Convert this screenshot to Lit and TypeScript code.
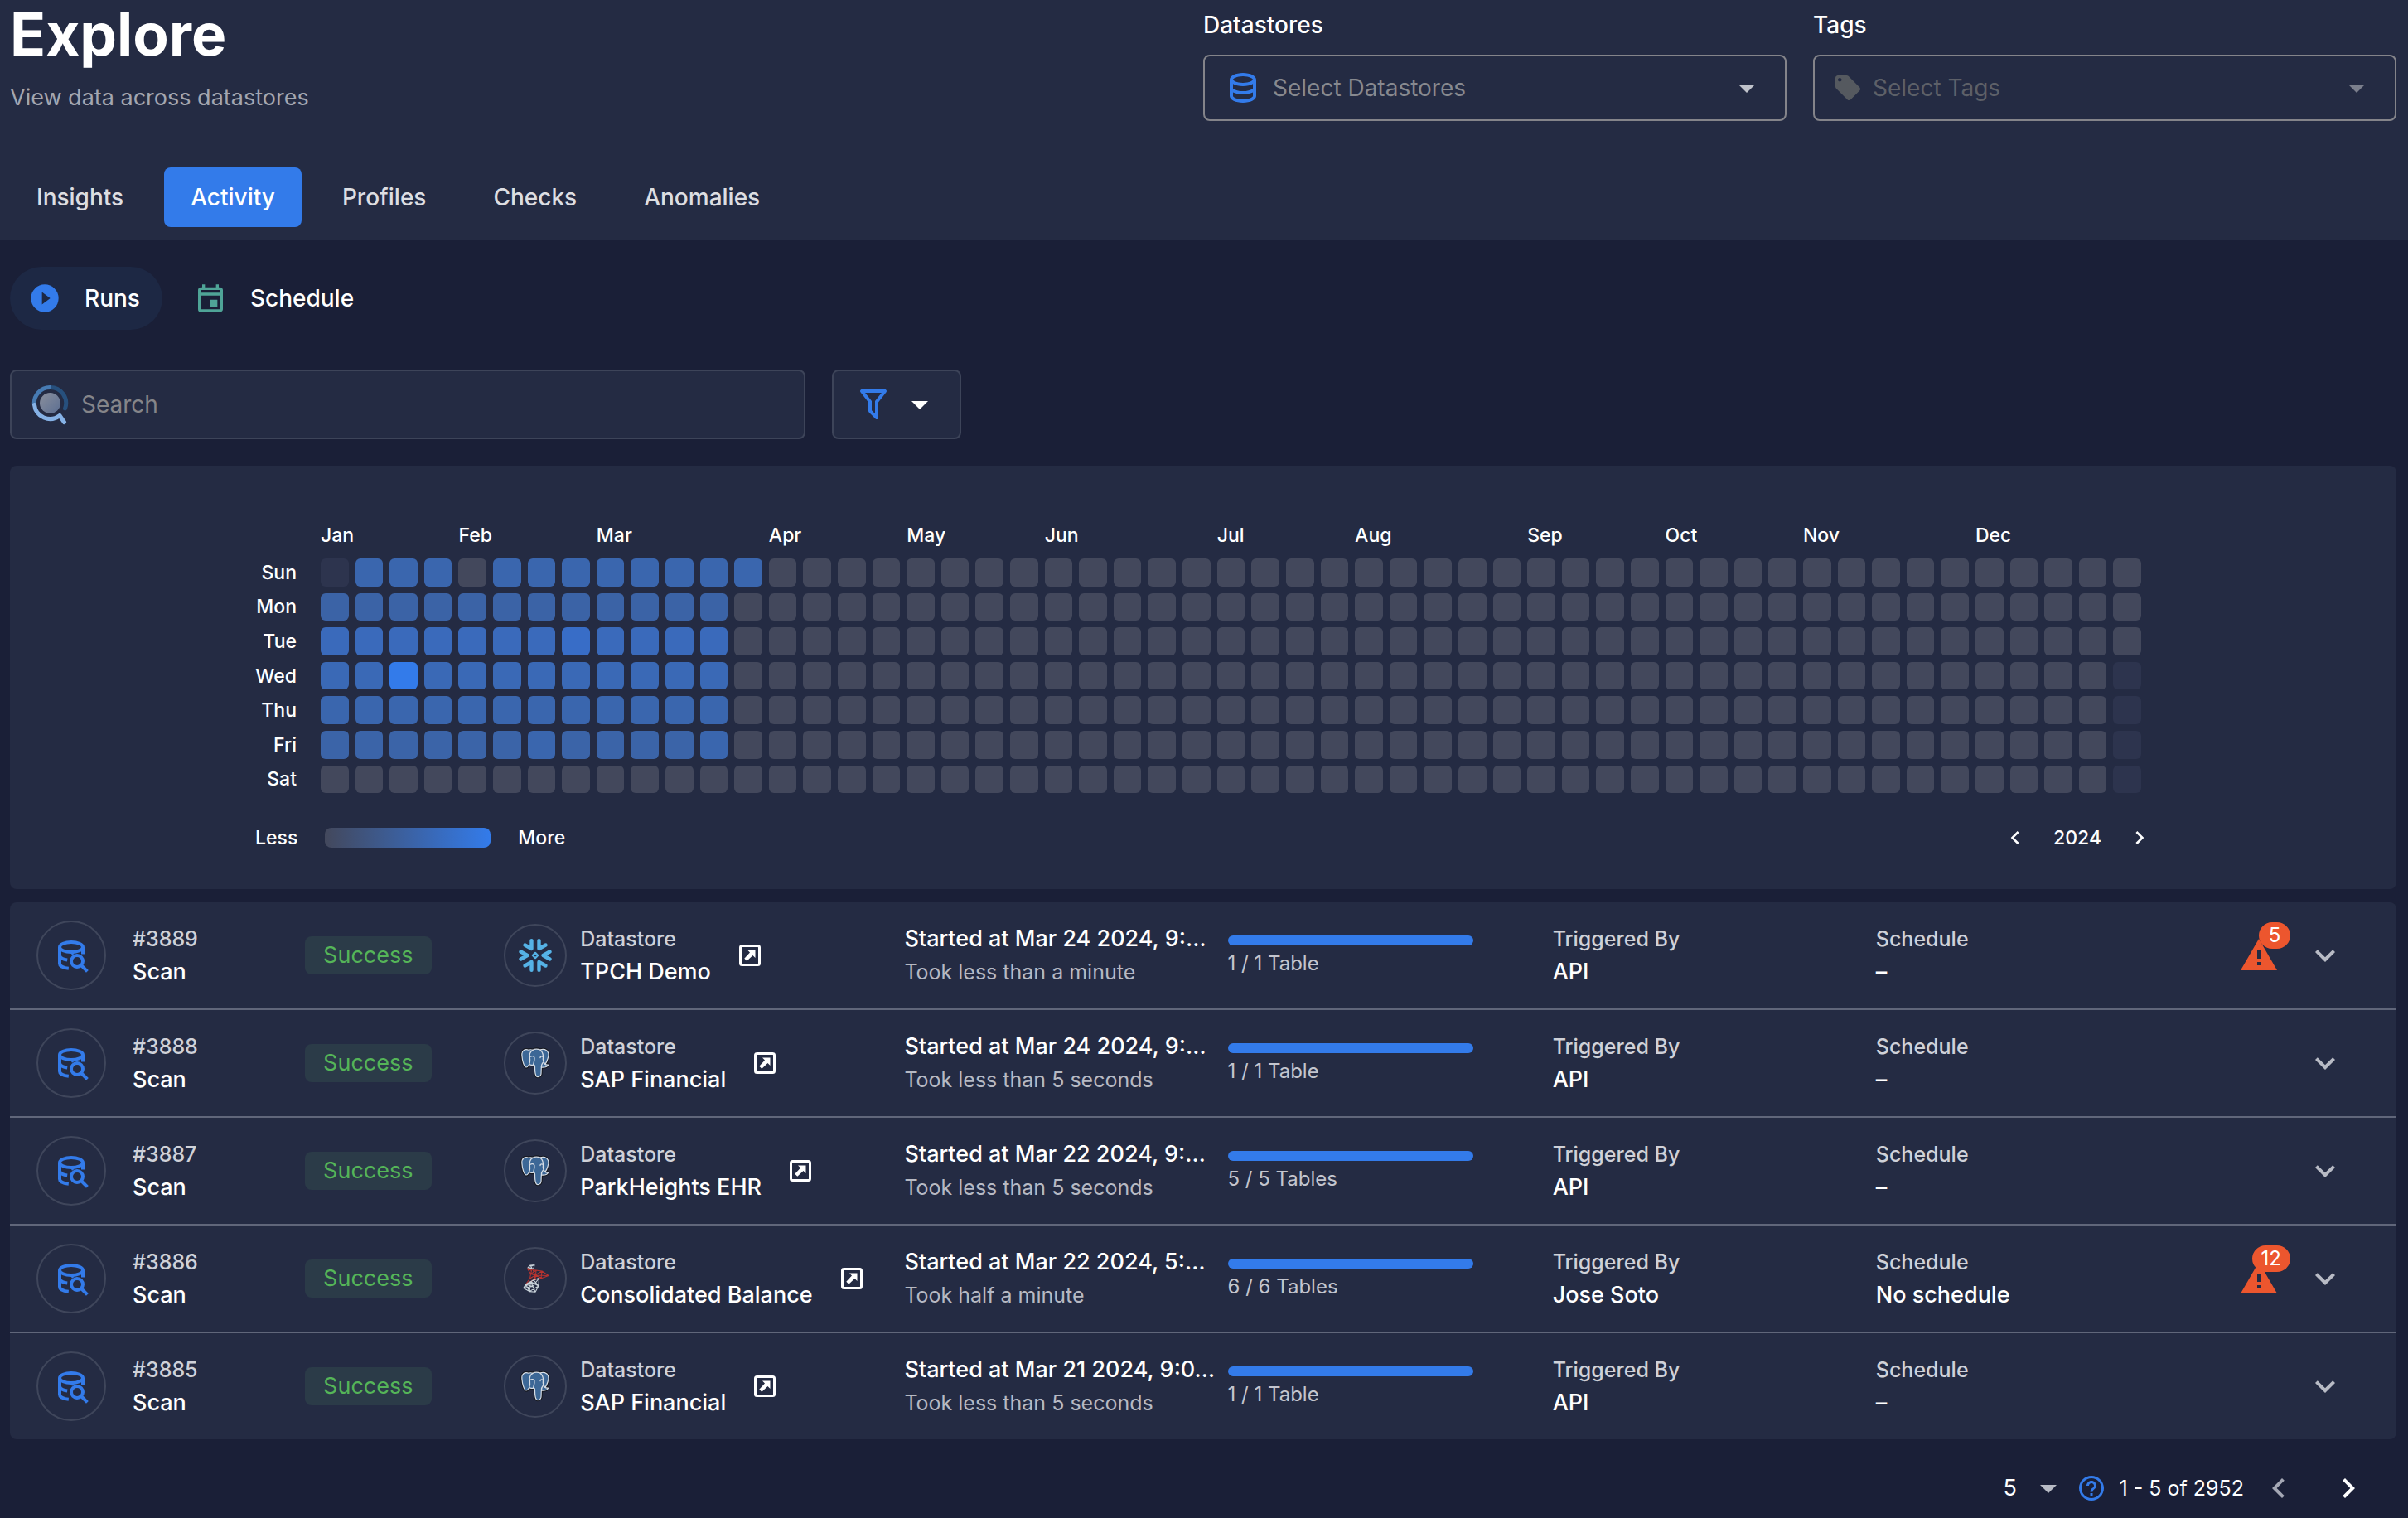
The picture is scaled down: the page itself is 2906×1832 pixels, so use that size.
import { LitElement, html, svg, css, nothing, SVGTemplateResult } from "lit";
import { customElement, state } from "lit/decorators.js";
import { classMap } from "lit/directives/class-map.js";

const PATHS = {
  database:
    "M12 3C7.58 3 4 4.79 4 7V17C4 19.21 7.59 21 12 21S20 19.21 20 17V7C20 4.79 16.42 3 12 3M18 17C18 17.5 15.87 19 12 19S6 17.5 6 17V14.77C7.61 15.55 9.72 16 12 16S16.39 15.55 18 14.77V17M18 12.45C16.7 13.4 14.42 14 12 14C9.58 14 7.3 13.4 6 12.45V9.64C7.47 10.47 9.61 11 12 11C14.39 11 16.53 10.47 18 9.64V12.45M12 9C8.13 9 6 7.5 6 7S8.13 5 12 5C15.87 5 18 6.5 18 7S15.87 9 12 9Z",
  tag: "M21.41 11.58l-9-9C12.05 2.22 11.55 2 11 2H4c-1.1 0-2 .9-2 2v7c0 .55.22 1.05.59 1.42l9 9c.36.36.86.58 1.41.58s1.05-.22 1.41-.59l7-7c.37-.36.59-.86.59-1.41 0-.55-.23-1.06-.59-1.42zM5.5 7C4.67 7 4 6.33 4 5.5S4.67 4 5.5 4 7 4.67 7 5.5 6.33 7 5.5 7z",
  play: "M10 16.5V7.5L16 12M12 2A10 10 0 0 0 2 12A10 10 0 0 0 12 22A10 10 0 0 0 22 12A10 10 0 0 0 12 2Z",
  calendar:
    "M19 4h-1V2h-2v2H8V2H6v2H5c-1.11 0-1.99.9-1.99 2L3 20a2 2 0 0 0 2 2h14c1.1 0 2-.9 2-2V6c0-1.1-.9-2-2-2zm0 16H5V10h14v10zm0-12H5V6h14v2zM17 13h-5v5h5z",
  filter:
    "M15,19.88C15.04,20.18 14.94,20.5 14.71,20.71C14.32,21.1 13.69,21.1 13.3,20.71L9.29,16.7C9.06,16.47 8.96,16.16 9,15.87V10.75L4.21,4.62C3.87,4.19 3.95,3.56 4.38,3.22C4.57,3.08 4.78,3 5,3H19C19.22,3 19.43,3.08 19.62,3.22C20.05,3.56 20.13,4.19 19.79,4.62L15,10.75V19.88M7.04,5L11,10.06V15.58L13,17.58V10.05L16.96,5H7.04Z",
  caret: "M7 10L12 15L17 10Z",
  alert: "M13 14H11V9H13M13 18H11V16H13M1 21H23L12 2L1 21Z",
  down: "M7.41 8.58L12 13.17L16.59 8.58L18 10L12 16L6 10L7.41 8.58Z",
  left: "M15.41 16.58L10.83 12L15.41 7.41L14 6L8 12L14 18L15.41 16.58Z",
  right: "M8.59 16.58L13.17 12L8.59 7.41L10 6L16 12L10 18L8.59 16.58Z",
  help: "M11 18h2v-2h-2v2zm1-16C6.48 2 2 6.48 2 12s4.48 10 10 10 10-4.48 10-10S17.52 2 12 2zm0 18c-4.41 0-8-3.59-8-8s3.59-8 8-8 8 3.59 8 8-3.59 8-8 8zm0-14c-2.21 0-4 1.79-4 4h2c0-1.1.9-2 2-2s2 .9 2 2c0 2-3 1.75-3 5h2c0-2.25 3-2.5 3-5 0-2.21-1.79-4-4-4z",
};

const icon = (name: keyof typeof PATHS, cls = "") =>
  html`<svg class="icon ${cls}" viewBox="0 0 24 24" aria-hidden="true"><path d=${PATHS[name]} /></svg>`;

const scanIcon = html`<svg class="icon large" viewBox="0 0 24 24" aria-hidden="true">
  <g fill="none" stroke="#337bea" stroke-width="2">
    <ellipse cx="12" cy="7" rx="7" ry="3" />
    <path d="M5 7v10c0 1.500 2.300 2.600 5.400 2.900M19 7v4.200M5 12.300c.6 1.300 2.200 2.200 4.600 2.500M13.500 10.200c-.6.200-1 .5-1.500.8" />
    <circle cx="15.500" cy="15.500" r="3.500" />
    <path d="M18 18l3.700 3.700" />
  </g>
</svg>`;

const searchLogo = html`<svg class="logo" viewBox="0 0 46 50" aria-hidden="true">
  <defs>
    <linearGradient id="disc" x1="0" y1="0" x2="1" y2="1">
      <stop offset="0" stop-color="#8a8f9c" />
      <stop offset="1" stop-color="#5b6e92" />
    </linearGradient>
  </defs>
  <g fill="none" stroke-width="5">
    <path d="M22.500 4.500A19 19 0 0 1 40.500 30" stroke="#27507d" stroke-linecap="round" />
    <path d="M3.500 26A19 19 0 0 1 23 4.500" stroke="#477bb3" />
    <path d="M3.500 25.500A19 19 0 0 0 34 38.500L39.500 46.500" stroke="#86b2e6" stroke-linejoin="round" stroke-linecap="round" />
  </g>
  <circle cx="22.500" cy="23.500" r="12.500" fill="url(#disc)" />
</svg>`;

const openIcon = html`<svg class="open" viewBox="0 0 28 28" aria-hidden="true">
  <rect x="2.500" y="2.500" width="23" height="23" rx="2" fill="none" stroke="#fff" stroke-width="3" />
  <path d="M11 7.500H20.500V17L17.500 14L10.300 20.700L7.300 17.700L14 10.500Z" fill="#fff" />
</svg>`;

type Source = "snowflake" | "postgres" | "sqlserver";

const SOURCES: Record<Source, SVGTemplateResult> = {
  snowflake: svg`
    <g fill="none" stroke="#55b2e6" stroke-width="4.400" stroke-linecap="round" stroke-linejoin="round">
      <path d="M37.500 15.500L29.500 20L37.500 24.500M2.500 15.500L10.500 20L2.500 24.500" />
      <path d="M15.500 2.300V12L7.500 7.500M24.500 2.300V12L32.500 7.500" />
      <path d="M15.500 37.700V28L7.500 32.500M24.500 37.700V28L32.500 32.500" />
      <path d="M20 16.800L23.200 20L20 23.200L16.800 20Z" stroke-width="2.200" />
    </g>`,
  postgres: svg`
    <g stroke-linejoin="round" stroke-linecap="round">
      <path d="M12 4.200C7 2.500 3.400 5 3.900 11C4.300 17 6.300 24.500 9 25C10.600 25.200 11.800 23 12.700 21.500C14 22.500 15.600 22.600 17 22.300C18.200 22 19.400 22.300 19.500 24C19.600 27 19.200 33.500 21.500 36C23 37.200 26.500 36.200 26.900 33.500C27.300 31 27 27 27.400 25C30 25.300 34 24.800 35.600 22.200C34.500 22 32.600 22.300 31.900 21.400C34.300 18 36.800 11 35.600 7.500C33.900 3.400 29.500 2.600 26 4C23 2.900 19.500 2.700 17 4.300C15.500 3.700 13.600 3.600 12 4.200Z" fill="#3c6796" stroke="#16181f" stroke-width="3.400" />
      <path d="M12 4.200C7 2.500 3.400 5 3.900 11C4.300 17 6.300 24.500 9 25C10.600 25.200 11.800 23 12.700 21.500C14 22.500 15.600 22.600 17 22.300C18.200 22 19.400 22.300 19.500 24C19.600 27 19.200 33.500 21.500 36C23 37.200 26.500 36.200 26.900 33.500C27.300 31 27 27 27.400 25C30 25.300 34 24.800 35.600 22.200C34.500 22 32.600 22.300 31.900 21.400C34.300 18 36.800 11 35.600 7.500C33.900 3.400 29.500 2.600 26 4C23 2.900 19.500 2.700 17 4.300C15.500 3.700 13.600 3.600 12 4.200Z" fill="#3c6796" stroke="#d6dde6" stroke-width="1.200" />
      <path d="M17 4.300C13.500 6 12.800 9.500 13.400 13.500C13.800 16.500 13.600 19 12.700 21.500M26 4C29 7 30 10.500 29.400 14C29 17 30 19.500 31.900 21.400M13.500 12.500C16 11 18.500 11.600 18.900 13.500C19.400 16.500 18 19.500 17.600 22.200M27.400 25C27 22.500 27.500 21.500 29.200 19.500M29.400 12.300C27.500 11.500 25.800 12 26 13.500" fill="none" stroke="#d6dde6" stroke-width="1.300" />
    </g>`,
  sqlserver: svg`
    <g fill="none" stroke-width="1.100" stroke-linejoin="round">
      <path d="M11 7L14 4L19 3.500L18 8L11 7L19 3.500M14 4L16 7.600" stroke="#c9d3da" />
      <path d="M10.500 8L17 9.500L28 11L36 16.500L28 19.500L18.500 21.500L8.500 27L13.500 20L14.500 14.500ZM10.500 8L15.500 10.500L14.500 14.500L21 10.200L20 20.500M14.500 14.500L20 16L28 11L27 19.500L20 16L36 16.500M13.500 20L20 16L18.500 21.500L13.500 20M17 9.500L20 16L28 19.500" stroke="#b8332f" />
      <path d="M8.500 27L18 21.800L24.500 19.500L24 29L20 36.300L13 35.600L5.800 31.500ZM8.500 27L13 35.600L14.500 23.800L20 36.300M5.800 31.500L14.500 23.800L24 29L13 35.600M24.500 19.500L17 29.500L5.800 31.500M18 21.800L24 29M8.500 27L17 29.500L20 36.300" stroke="#c9d3da" />
    </g>`,
};

interface Run {
  id: number;
  source: Source;
  store: string;
  started: string;
  took: string;
  done: number;
  total: number;
  by: string;
  schedule: string;
  alerts: number;
}

const RUNS: Run[] = [
  { id: 3889, source: "snowflake", store: "TPCH Demo", started: "Started at Mar 24 2024, 9:…", took: "Took less than a minute", done: 1, total: 1, by: "API", schedule: "–", alerts: 5 },
  { id: 3888, source: "postgres", store: "SAP Financial", started: "Started at Mar 24 2024, 9:…", took: "Took less than 5 seconds", done: 1, total: 1, by: "API", schedule: "–", alerts: 0 },
  { id: 3887, source: "postgres", store: "ParkHeights EHR", started: "Started at Mar 22 2024, 9:…", took: "Took less than 5 seconds", done: 5, total: 5, by: "API", schedule: "–", alerts: 0 },
  { id: 3886, source: "sqlserver", store: "Consolidated Balance", started: "Started at Mar 22 2024, 5:…", took: "Took half a minute", done: 6, total: 6, by: "Jose Soto", schedule: "No schedule", alerts: 12 },
  { id: 3885, source: "postgres", store: "SAP Financial", started: "Started at Mar 21 2024, 9:0…", took: "Took less than 5 seconds", done: 1, total: 1, by: "API", schedule: "–", alerts: 0 },
];

const MONTHS: [string, number][] = [
  ["Jan", 0], ["Feb", 4], ["Mar", 8], ["Apr", 13], ["May", 17], ["Jun", 21],
  ["Jul", 26], ["Aug", 30], ["Sep", 35], ["Oct", 39], ["Nov", 43], ["Dec", 48],
];
const DAYS = ["Sun", "Mon", "Tue", "Wed", "Thu", "Fri", "Sat"];
const DAY_LEVEL = [3, 1, 5, 4, 3, 2, 0];
const WEEKS = 53;

/** Activity level of one day: -1 lies outside the year, 0 had no runs, 7 is the busiest. */
function level(day: number, week: number): number {
  if ((week === 0 && day === 0) || (week === WEEKS - 1 && day > 2)) return -1;
  if (day === 6) return 0;
  if (day === 0) return week <= 12 && week !== 4 ? 3 : 0;
  if (week > 11) return 0;
  if (day === 3 && week === 2) return 7;
  if (day === 2 && week === 7) return 6;
  if (day === 5 && (week === 6 || week === 11)) return 3;
  return DAY_LEVEL[day];
}

const base = css`
  * { box-sizing: border-box; }
  button, input, select { font: inherit; color: inherit; border: 0; background: none; padding: 0; margin: 0; }
  button { cursor: pointer; }
  select { appearance: none; outline: none; }
  a { color: inherit; text-decoration: none; }
  .icon { display: block; flex: none; fill: currentColor; width: 40px; height: 40px; }
  .icon.large { width: 48px; height: 48px; }
  .icon.medium { width: 36px; height: 36px; }
  .icon.small { width: 32px; height: 32px; }
`;

@customElement("run-heatmap")
class RunHeatmap extends LitElement {
  @state() private year = 2024;

  static styles = [base, css`
    :host { display: block; background: #242b43; border-radius: 8px; padding: 68px 10% 46px; font-size: 23px; font-weight: 500; line-height: 32px; }
    .months, .week { display: grid; grid-template-columns: 79px repeat(53, minmax(0, 1fr)); gap: 8px; margin-right: 20px; }
    .months { margin-bottom: 12px; }
    .month { grid-row: 1; white-space: nowrap; }
    .week { margin-bottom: 8px; align-items: center; }
    .day { text-align: right; padding-right: 21px; }
    .cell { aspect-ratio: 1; border-radius: 6px; background: #43485c; }
    .blank { background: #2d344e; }
    .l1 { background: #3b63a6; }
    .l2 { background: #3b64a8; }
    .l3 { background: #3a66ae; }
    .l4 { background: #3a69b6; }
    .l5 { background: #3a6abb; }
    .l6 { background: #386dc7; }
    .l7 { background: #337bea; }
    .foot { display: flex; align-items: center; padding: 0 6px 0 8px; margin-top: 38px; gap: 33px; }
    .scale { width: 200px; height: 24px; border-radius: 8px; background: linear-gradient(90deg, #43485c, #337bea); }
    .year { margin-left: auto; display: flex; align-items: center; gap: 30px; }
  `];

  render() {
    return html`
      <div class="months">
        ${MONTHS.map(([name, week]) => html`<span class="month" style="grid-column: ${week + 2} / span 3">${name}</span>`)}
      </div>
      ${DAYS.map((name, day) => html`
        <div class="week">
          <span class="day">${name}</span>
          ${Array.from({ length: WEEKS }, (_, week) => {
            const l = level(day, week);
            return html`<span class="cell ${l < 0 ? "blank" : `l${l}`}"></span>`;
          })}
        </div>`)}
      <div class="foot">
        <span>Less</span><span class="scale"></span><span>More</span>
        <div class="year">
          <button aria-label="Previous year" @click=${() => this.year--}>${icon("left", "small")}</button>
          <span>${this.year}</span>
          <button aria-label="Next year" @click=${() => this.year++}>${icon("right", "small")}</button>
        </div>
      </div>`;
  }
}

@customElement("run-list")
class RunList extends LitElement {
  static styles = [base, css`
    :host { display: block; background: #242b43; border-radius: 8px; font-size: 27px; line-height: 40px; font-weight: 500; }
    ul { list-style: none; margin: 0; padding: 0; }
    li { display: grid; grid-template-columns: 324fr 240fr 483fr 390fr 392fr 390fr 300fr 266fr; align-items: center; height: 130px; padding: 0 62px 0 32px; border-bottom: 2px solid #60667a; }
    li:last-child { border-bottom: 0; height: 128px; }
    li > * { min-width: 0; white-space: nowrap; }
    .who { display: flex; align-items: center; gap: 32px; }
    .store { display: flex; align-items: center; gap: 16px; }
    .circle { display: grid; place-items: center; flex: none; width: 84px; height: 84px; border-radius: 50%; border: 2px solid #3f465b; }
    .store .circle { width: 76px; height: 76px; }
    .brand { display: block; width: 40px; height: 40px; }
    .label { display: block; font-size: 25px; color: #cfd1d8; }
    .value { display: block; }
    .took { font-weight: 400; font-size: 25px; color: #b6b9c3; }
    .chip { display: inline-block; line-height: 46px; padding: 0 22px; border-radius: 8px; background: #2b3b48; color: #55b558; font-weight: 400; }
    .link { margin-left: 17px; }
    .open { display: block; width: 28px; height: 28px; }
    .progress { align-self: start; padding: 40px 96px 0 0; font-weight: 400; }
    .track { height: 12px; border-radius: 6px; background: #3f465b; overflow: hidden; }
    .bar { height: 100%; background: #337bea; }
    .count { font-size: 24px; line-height: 32px; margin-top: 6px; color: #c3c5ce; }
    .actions { display: flex; justify-content: flex-end; gap: 32px; color: #b8bbc5; }
    .alert { position: relative; color: #ec562e; }
    .badge { position: absolute; top: -16px; right: -14px; min-width: 38px; height: 32px; padding: 0 11px; border-radius: 16px; background: #ec562e; color: #fff; font-size: 24px; font-weight: 400; line-height: 32px; text-align: center; }
  `];

  render() {
    return html`<ul>${RUNS.map((r) => html`
      <li>
        <div class="who">
          <span class="circle">${scanIcon}</span>
          <div><span class="label">#${r.id}</span><span class="value">Scan</span></div>
        </div>
        <div><span class="chip">Success</span></div>
        <div class="store">
          <span class="circle"><svg class="brand" viewBox="0 0 40 40" aria-hidden="true">${SOURCES[r.source]}</svg></span>
          <div><span class="label">Datastore</span><span class="value">${r.store}</span></div>
          <a class="link" href="#${r.id}" aria-label="Open ${r.store}">${openIcon}</a>
        </div>
        <div><span class="value">${r.started}</span><span class="value took">${r.took}</span></div>
        <div class="progress">
          <div class="track"><div class="bar" style="width: ${(r.done / r.total) * 100}%"></div></div>
          <div class="count">${r.done} / ${r.total} ${r.total === 1 ? "Table" : "Tables"}</div>
        </div>
        <div><span class="label">Triggered By</span><span class="value">${r.by}</span></div>
        <div><span class="label">Schedule</span><span class="value">${r.schedule}</span></div>
        <div class="actions">
          ${r.alerts ? html`<a class="alert" href="#anomalies" aria-label="Anomalies">${icon("alert", "large")}<span class="badge">${r.alerts}</span></a>` : nothing}
          <button aria-label="Expand run">${icon("down", "large")}</button>
        </div>
      </li>`)}</ul>`;
  }
}

@customElement("app-root")
class AppRoot extends LitElement {
  @state() private view = "Runs";

  static styles = [base, css`
    :host { display: block; min-height: 100vh; background: #1a1f37; color: #fff; font-family: Inter, "Liberation Sans", sans-serif; font-size: 28px; line-height: 40px; }
    header { background: #242b43; padding: 0 14px 16px 12px; }
    .top { display: grid; grid-template-columns: minmax(0, 1fr) minmax(0, 1fr); }
    h1 { margin: 0; font-size: 71px; line-height: 82px; font-weight: 700; }
    .sub { margin: 16px 0 0; font-size: 27px; color: #a3a6b0; }
    .fields { display: grid; grid-template-columns: 1fr 1fr; gap: 32px; padding-top: 10px; }
    .fields label { display: block; font-weight: 500; margin-bottom: 16px; }
    .field { display: flex; align-items: center; height: 80px; padding: 0 22px; gap: 12px; border: 2px solid #84848a; border-radius: 8px; color: #c0c3cb; }
    .field select { flex: 1; min-width: 0; height: 100%; color: #87898f; opacity: 1; }
    .field .database { color: #337bea; }
    .field.off { color: #55595f; }
    .field.off select { color: #5d6068; }
    .field.off .icon:last-child { color: #7b7f8c; }
    nav { display: flex; gap: 17px; margin-top: 56px; font-weight: 500; color: #dddee2; }
    nav a { line-height: 72px; padding: 0 32px; border-radius: 8px; }
    nav a.active { background: #337bea; color: #fff; }
    main { padding: 32px 14px 12px 12px; }
    .views { display: flex; font-weight: 500; gap: 16px; }
    .views button { display: flex; align-items: center; gap: 28px; height: 76px; padding: 0 27px 0 22px; border-radius: 38px; }
    .views button.active { background: #1d2844; }
    .views .play { color: #337bea; }
    .views .calendar { color: #4fa497; }
    .filters { display: flex; gap: 32px; margin: 48px 0 32px; }
    .search, .filter { display: flex; align-items: center; height: 84px; border: 2px solid #3d4459; border-radius: 8px; background: #242b43; }
    .search { width: calc(100% / 3); padding: 0 24px; gap: 14px; }
    .search input { flex: 1; min-width: 0; outline: none; }
    .search input::placeholder { color: #858589; opacity: 1; }
    .logo { width: 46px; height: 50px; flex: none; }
    .filter { padding: 0 24px; gap: 8px; }
    .filter .funnel { color: #337bea; }
    run-list { margin-top: 16px; }
    .pager { display: flex; align-items: center; justify-content: flex-end; margin-top: 35px; padding-right: 34px; font-size: 25px; }
    .pager select { width: 30px; height: 40px; font-size: 27px; }
    .pager .size { color: #b8bbc5; display: flex; align-items: center; }
    .pager .size select { color: #fff; }
    .pager .help { color: #337bea; margin: 0 16px 0 10px; }
    .pager .prev { color: #a4a7b4; margin: 0 36px 0 18px; }
  `];

  render() {
    return html`
      <header>
        <div class="top">
          <div>
            <h1>Explore</h1>
            <p class="sub">View data across datastores</p>
          </div>
          <div class="fields">
            <div>
              <label for="stores">Datastores</label>
              <div class="field">
                ${icon("database", "large database")}
                <select id="stores"><option>Select Datastores</option></select>
                ${icon("caret", "large")}
              </div>
            </div>
            <div>
              <label for="tags">Tags</label>
              <div class="field off">
                ${icon("tag", "medium")}
                <select id="tags" disabled><option>Select Tags</option></select>
                ${icon("caret", "large")}
              </div>
            </div>
          </div>
        </div>
        <nav>
          ${["Insights", "Activity", "Profiles", "Checks", "Anomalies"].map((t) => html`
            <a href="#${t.toLowerCase()}" class=${classMap({ active: t === "Activity" })}>${t}</a>`)}
        </nav>
      </header>
      <main>
        <div class="views">
          <button class=${classMap({ active: this.view === "Runs" })} @click=${() => (this.view = "Runs")}>${icon("play", "play")}Runs</button>
          <button class=${classMap({ active: this.view === "Schedule" })} @click=${() => (this.view = "Schedule")}>${icon("calendar", "calendar")}Schedule</button>
        </div>
        <div class="filters">
          <div class="search">${searchLogo}<input type="text" placeholder="Search" aria-label="Search" /></div>
          <button class="filter" aria-label="Filter">${icon("filter", "large funnel")}${icon("caret", "large")}</button>
        </div>
        <run-heatmap></run-heatmap>
        <run-list></run-list>
        <div class="pager">
          <div class="size">
            <select aria-label="Rows per page"><option>5</option></select>
            ${icon("caret", "large")}
          </div>
          ${icon("help", "medium help")}
          <span>1 - 5 of 2952</span>
          <button class="prev" aria-label="Previous page">${icon("left", "large")}</button>
          <button aria-label="Next page">${icon("right", "large")}</button>
        </div>
      </main>`;
  }
}
